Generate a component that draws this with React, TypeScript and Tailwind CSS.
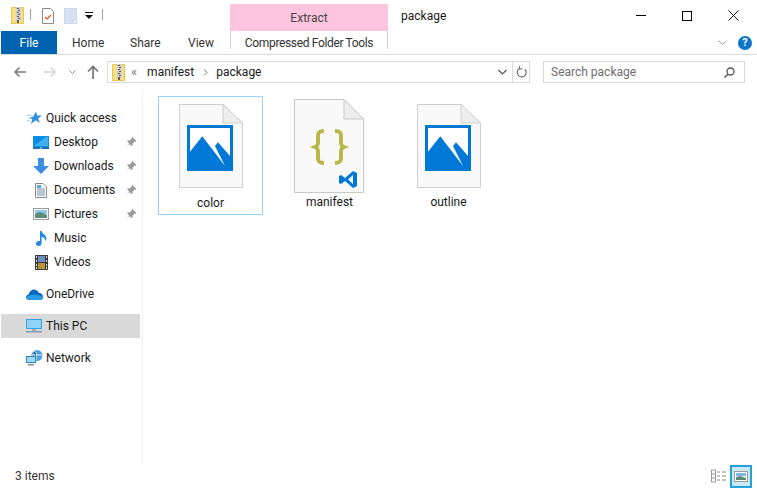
import React from "react";

const Zip = () => (
  <svg width="13" height="17" viewBox="0 0 13 17" className="block">
    <path d="M.5.5h12v16H.5z" fill="#f8e08a" stroke="#e6c552" />
    <rect x="5" y="0" width="5" height="14" fill="#cfcfcf" />
    <path d="M6 1h2v1H6zM7 3h2v1H7zM6 5h2v1H6zM7 7h2v1H7zM6 9h2v1H6zM7 11h2v1H7zM6 13h2v3H6z" fill="#5f5f5f" />
  </svg>
);

const Pin = () => (
  <svg width="12" height="12" viewBox="0 0 12 12" className="shrink-0">
    <path d="M7 .5l4.500 4.500-1 .8-.9-.3-2.200 2.200.1 1.800-.8.8-2.300-2.300L1 11l3.200-3.600-2.100-2.300.8-.8 1.800.1 2.200-2.200-.3-.9z" fill="#9a9a9a" />
  </svg>
);

const DesktopIcon = () => (
  <svg width="16" height="13" viewBox="0 0 16 13"><rect width="16" height="11.500" fill="#0f8ee6" /><path d="M2 9.500L13 1h2v9H2z" fill="#3fb0f2" /><rect y="11" width="16" height="2" fill="#1d6fb0" /><rect x="7" y="11.500" width="2" height="1" fill="#cfe8f8" /></svg>
);
const DownloadIcon = () => (
  <svg width="16" height="16" viewBox="0 0 16 16"><path d="M5 0h6v8h5l-8 8-8-8h5z" fill="#3b8ee0" /></svg>
);
const DocIcon = () => (
  <svg width="12" height="15" viewBox="0 0 12 15"><path d="M.5.5h7.500l3.500 3.500v10.500H.5z" fill="#fff" stroke="#8a8a8a" /><path d="M2 6h8M2 8h8M2 10h8M2 12h8" stroke="#6f8ea8" /><path d="M2 2h4v3H2z" fill="#5aa6dc" /></svg>
);
const PicIcon = () => (
  <svg width="16" height="12" viewBox="0 0 16 12"><rect x=".5" y=".5" width="15" height="11" fill="#fff" stroke="#9c9c9c" /><rect x="2" y="2" width="12" height="4" fill="#8dc6ea" /><path d="M2 6l5-2 7 3v3H2z" fill="#5c8a78" /></svg>
);
const MusicIcon = () => (
  <svg width="11" height="15" viewBox="0 0 11 15"><path d="M4 0h1.600c.4 3 4.800 3.400 4.800 8 0 1-.3 2-.8 2.600.2-3-2.200-4.400-4-4.900V12c0 1.700-1.300 3-3 3S0 14 0 12.600 1.400 10 2.600 10c.5 0 1 .1 1.400.3z" fill="#1e88e5" /></svg>
);
const VideoIcon = () => (
  <svg width="13" height="15" viewBox="0 0 13 15"><rect width="13" height="15" fill="#3b3b3b" /><rect x="3" y="1" width="7" height="6" fill="#6a8fc4" /><rect x="3" y="8" width="7" height="6" fill="#b8963c" /><path d="M1 1h1v2H1zM1 5h1v2H1zM1 9h1v2H1zM1 12h1v2H1zM11 1h1v2h-1zM11 5h1v2h-1zM11 9h1v2h-1zM11 12h1v2h-1z" fill="#ddd" /></svg>
);
const StarIcon = () => (
  <svg width="15" height="14" viewBox="0 0 16 14"><path d="M9.500 0l1.300 4.300H16l-4 3 1.500 5-4-3L4 13.500l1.700-5L3 6.500l3.500-.8z" fill="#2f8fdf" /><path d="M0 4h5M1 7h3M0 10h3" stroke="#8cc4ee" /></svg>
);
const CloudIcon = () => (
  <svg width="17" height="11" viewBox="0 0 17 11"><path d="M3.500 11C1.500 11 0 9.700 0 8.200S1.200 5.600 2.600 5.500C3.200 2.500 5.500.5 8 .5c2.300 0 4 1.300 4.700 3.200 2.400 0 4.300 1.800 4.300 4 0 1.800-1.300 3.300-3 3.300z" fill="#0a6cc0" /><path d="M3.500 11C1.500 11 0 9.700 0 8.200c3-2.500 8-3.500 17-.5 0 1.800-1.300 3.300-3 3.300z" fill="#2a9ae8" /></svg>
);
const PcIcon = () => (
  <svg width="16" height="14" viewBox="0 0 16 14"><rect width="16" height="10" fill="#2da4ea" /><rect x="1" y="1" width="14" height="8" fill="#8fd2f5" /><rect x="6" y="10" width="4" height="2" fill="#9dafbc" /><rect y="12" width="16" height="1.500" fill="#8a9cab" /></svg>
);
const NetIcon = () => (
  <svg width="17" height="16" viewBox="0 0 17 16"><circle cx="11" cy="5.500" r="5.500" fill="#4ca3dc" /><path d="M8 1c3 2 3 6 2 9M6 5h10" stroke="#d6ecf8" /><rect x="0" y="6" width="10" height="7" fill="#2e86c8" /><rect x="1" y="7" width="8" height="5" fill="#9fd6f4" /><rect x="2" y="14" width="6" height="1.500" fill="#7c8f9e" /></svg>
);

const NavRow = ({ icon, label, pin, deep, selected, mt }: { icon: React.ReactNode; label: string; pin?: boolean; deep?: boolean; selected?: boolean; mt?: string }) => (
  <div className={`flex items-center h-6 w-[139px] ${selected ? "bg-[#d9d9d9]" : ""} ${mt ?? ""}`}>
    <div className={`flex justify-center shrink-0 ${deep ? "w-[32px] ml-[24px] mr-[-3px]" : "w-[24px] ml-[21px] mr-0"}`}>
      <div className="w-[17px] flex justify-center">{icon}</div>
    </div>
    <span className="flex-1">{label}</span>
    {pin && <span className="mr-[3px]"><Pin /></span>}
  </div>
);

const ImageFile = () => (
  <svg width="64" height="84" viewBox="0 0 64 84" className="block">
    <path d="M.5.5h43.500l19.500 18.500v64.500H.5z" fill="#f9f9fa" stroke="#cfcfcf" />
    <path d="M44 .5v18.500h19.500z" fill="#eeeeee" stroke="#cfcfcf" />
    <rect x="8" y="21" width="46" height="46" fill="#0078d7" />
    <path d="M11 24H51V52L39 38.300 36 42 46 62 23.300 32.300 11 47.700z" fill="#fff" />
  </svg>
);

const JsonFile = () => (
  <svg width="70" height="94" viewBox="0 0 70 94" className="block">
    <path d="M.5.500h49.500l19.500 19.500v73.500H.5z" fill="#f9f9fa" stroke="#c9c9c9" />
    <path d="M50 .5v19.500h19.500z" fill="#eeeeee" stroke="#c9c9c9" />
    <path d="M30 32c-5 0-6 2-6 5v6c0 3-.5 4-3 5 2.500 1 3 2 3 5v6c0 3 1 5 6 5" fill="none" stroke="#b8b848" strokeWidth="4" />
    <path d="M41 32c5 0 6 2 6 5v6c0 3 .5 4 3 5-2.500 1-3 2-3 5v6c0 3-1 5-6 5" fill="none" stroke="#b8b848" strokeWidth="4" />
    <path d="M59 72l4 2v13l-4 2-8-7-4 3-2-1v-7l2-1 4 3zM59 76l-5 4.500 5 4.500z" fill="#0078d7" fillRule="evenodd" />
  </svg>
);

const FileItem = ({ icon, label, selected, h, lab }: { icon: React.ReactNode; label: string; selected?: boolean; h: string; lab: string }) => (
  <div className={`w-[105px] h-[119px] flex flex-col items-center border ${selected ? "border-[#99d1ff]" : "border-transparent"}`}>
    <div className={`flex items-end justify-center ${h}`}>{icon}</div>
    <span className={`leading-[18px] ${lab}`}>{label}</span>
  </div>
);

export default function App() {
  return (
    <div className="w-[757px] h-[488px] bg-white flex flex-col overflow-hidden text-[12px] text-[#1a1a1a]" style={{ fontFamily: 'Roboto,"Noto Sans",sans-serif' }}>
      <div className="flex h-[31px] shrink-0">
        <div className="w-[230px] flex items-center pl-[11px]">
          <Zip />
          <div className="w-px h-[11px] bg-[#a0a0a0] ml-[6px] mt-[-2px]" />
          <div className="ml-[11px]">
            <svg width="12" height="16" viewBox="0 0 12 16" className="block"><path d="M.5.5h8l3 3v12H.5z" fill="#fff" stroke="#8a8a8a" /><path d="M3 9l2 2 4-4" fill="none" stroke="#e8622c" strokeWidth="1.500" /></svg>
          </div>
          <div className="ml-[10px]">
            <svg width="13" height="16" viewBox="0 0 13 16" className="block"><rect width="13" height="16" fill="#d6e2f2" stroke="#c3d0e2" /><path d="M9 16v-4h4" fill="#fff" stroke="#c3d0e2" /></svg>
          </div>
          <div className="ml-[8px]">
            <svg width="8" height="8" viewBox="0 0 8 8" className="block"><path d="M0 0h8v1H0zM0 3h8L4 7z" fill="#111" /></svg>
          </div>
          <div className="w-px h-[11px] bg-[#a0a0a0] ml-[9px] mt-[-2px]" />
        </div>
        <div className="w-[158px] h-[27px] mt-[4px] bg-[#ffc5de] flex items-center justify-center text-[#444]">Extract</div>
        <div className="pl-[13px] flex-1 flex items-center pt-[1px] text-[#1a1a1a]">package</div>
        <div className="flex items-center h-[31px] pr-px">
          <div className="w-[46px] flex justify-center"><div className="w-[10px] h-px bg-black" /></div>
          <div className="w-[46px] flex justify-center"><div className="w-[10px] h-[10px] border border-black" /></div>
          <div className="w-[46px] flex justify-center">
            <svg width="11" height="11" viewBox="0 0 11 11"><path d="M.5.5l10 10M10.500.5l-10 10" stroke="#111" /></svg>
          </div>
        </div>
      </div>

      <div className="flex h-[24px] shrink-0 items-stretch border-b border-[#dadada]">
        <div className="ml-px w-[56px] bg-[#0063b1] text-white flex items-center justify-center">File</div>
        <div className="w-[173px] flex items-center pl-[15px] text-[#333]">
          <span className="w-[58px]">Home</span>
          <span className="w-[58px]">Share</span>
          <span>View</span>
        </div>
        <div className="w-[158px] h-[18px] pt-[3px] leading-[18px] border-l border-r border-[#d0d0d0] text-center text-[#333] tracking-[-0.35px]">Compressed Folder Tools</div>
        <div className="flex-1 flex items-center justify-end pr-[5px] gap-[11px]">
          <svg width="9" height="5" viewBox="0 0 9 5"><path d="M.5.500l4 4 4-4" fill="none" stroke="#a0a0a0" /></svg>
          <div className="w-[14px] h-[14px] rounded-full bg-[#0a74c9] text-white font-bold text-[11px] leading-[14px] text-center">?</div>
        </div>
      </div>

      <div className="flex h-[35px] shrink-0 items-start pt-[6px]">
        <div className="flex items-center h-[22px] w-[107px] pl-[13px]">
          <svg width="14" height="12" viewBox="0 0 14 12"><path d="M13 6H2M6.500 1.500L2 6l4.500 4.500" fill="none" stroke="#7a7a7a" strokeWidth="1.600" /></svg>
          <svg width="14" height="12" viewBox="0 0 14 12" className="ml-[16px]"><path d="M1 6h11M7.500 1.500L12 6l-4.500 4.500" fill="none" stroke="#d4d4d4" strokeWidth="1.600" /></svg>
          <svg width="7" height="5" viewBox="0 0 7 5" className="ml-[12px]"><path d="M.5.500l3 3 3-3" fill="none" stroke="#8f8f8f" /></svg>
          <svg width="12" height="14" viewBox="0 0 12 14" className="ml-[11px]"><path d="M6 14V2M1 6.500L6 1.500l5 5" fill="none" stroke="#6f6f6f" strokeWidth="1.600" /></svg>
        </div>
        <div className="w-[423px] h-[22px] border border-[#d9d9d9] flex items-center">
          <div className="ml-[4px]"><Zip /></div>
          <span className="ml-[6px] text-[#777] text-[13px]">«</span>
          <span className="ml-[10px]">manifest</span>
          <svg width="5" height="7" viewBox="0 0 5 7" className="ml-[9px]"><path d="M1 .5l3 3-3 3" fill="none" stroke="#707070" /></svg>
          <span className="ml-[8px]">package</span>
          <div className="flex-1" />
          <svg width="9" height="6" viewBox="0 0 9 6"><path d="M.5 1l4 4 4-4" fill="none" stroke="#555" strokeWidth="1.200" /></svg>
          <div className="w-px h-[20px] bg-[#d9d9d9] ml-[5px]" />
          <div className="w-[16px] flex justify-center">
            <svg width="11" height="12" viewBox="0 0 11 12"><path d="M8.800 3.200A4.500 4.500 0 1 1 3.500 2.500M3.500 0v3h3" fill="none" stroke="#6f6f6f" strokeWidth="1.200" /></svg>
          </div>
        </div>
        <div className="ml-[13px] w-[202px] h-[22px] border border-[#d9d9d9] flex items-center pl-[7px] pr-[9px] text-[#6d6d6d]">
          <span className="flex-1">Search package</span>
          <svg width="11" height="11" viewBox="0 0 11 11"><circle cx="6.500" cy="4.500" r="3.500" fill="none" stroke="#555" strokeWidth="1.300" /><path d="M4 7l-3.500 3.500" stroke="#555" strokeWidth="1.500" /></svg>
        </div>
      </div>

      <div className="flex flex-1 min-h-0">
        <div className="w-[143px] border-r border-[#f0f0f0] pt-[16px] pl-px shrink-0 text-[#1a1a1a]">
          <NavRow icon={<StarIcon />} label="Quick access" />
          <NavRow deep icon={<DesktopIcon />} label="Desktop" pin />
          <NavRow deep icon={<DownloadIcon />} label="Downloads" pin />
          <NavRow deep icon={<DocIcon />} label="Documents" pin />
          <NavRow deep icon={<PicIcon />} label="Pictures" pin />
          <NavRow deep icon={<MusicIcon />} label="Music" />
          <NavRow deep icon={<VideoIcon />} label="Videos" />
          <NavRow mt="mt-2" icon={<CloudIcon />} label="OneDrive" />
          <NavRow mt="mt-2" selected icon={<PcIcon />} label="This PC" />
          <NavRow mt="mt-2" icon={<NetIcon />} label="Network" />
        </div>
        <div className="flex gap-[14px] pl-[15px] pt-[6px] items-start">
          <FileItem selected h="h-[91px]" lab="mt-[6px]" icon={<ImageFile />} label="color" />
          <FileItem h="h-[96px] -ml-px" lab="mt-0" icon={<JsonFile />} label="manifest" />
          <FileItem h="h-[91px]" lab="mt-[5px]" icon={<ImageFile />} label="outline" />
        </div>
      </div>

      <div className="h-[24px] shrink-0 flex items-center pl-[15px] pr-[5px] text-[#333]">
        <span className="flex-1">3 items</span>
        <svg width="16" height="14" viewBox="0 0 16 14" className="mr-[3px]">
          <path d="M.5 1h4v12h-4zM.5 5h4M.5 9h4" fill="#fff" stroke="#9a9a9a" />
          <path d="M6 3h3M11 3h4M6 7h3M11 7h4M6 11h3M11 11h4" stroke="#8a8a8a" />
        </svg>
        <div className="w-[22px] h-[23px] border-2 border-[#26a0da] bg-[#cbe8f6] flex items-center justify-center">
          <svg width="14" height="11" viewBox="0 0 14 11"><rect x=".5" y=".5" width="13" height="10" fill="#fff" stroke="#9a9a9a" /><rect x="2" y="2" width="10" height="3" fill="#7db6e4" /><path d="M2 6l4-1 6 2v2H2z" fill="#5d8a78" /></svg>
        </div>
      </div>
    </div>
  );
}
